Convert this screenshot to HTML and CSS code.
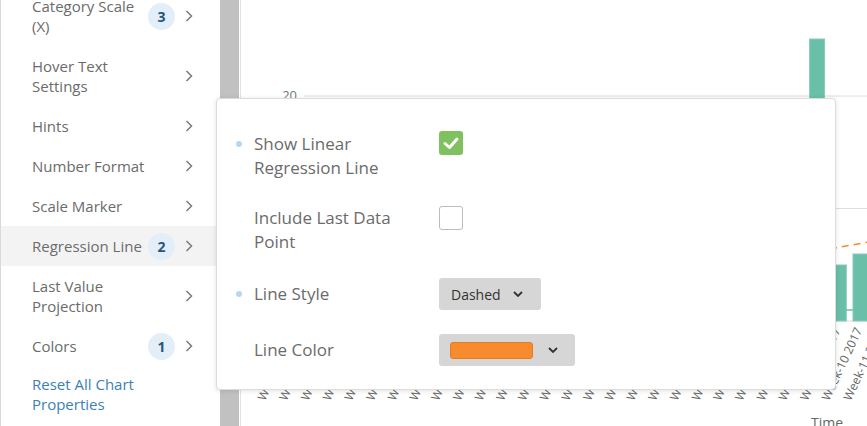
FILE: index.html
```html
<!DOCTYPE html>
<html lang="en">
<head>
    <meta charset="UTF-8">
    <title>Chart Properties - Regression Line</title>
    <link rel="stylesheet" href="styles.css">
</head>
<body>
<div class="app">
    <aside class="sidebar">
        <ul class="menu">
            <li class="menu-item"><span class="menu-label">Category Scale (X)</span><span class="badge">3</span><svg class="chevron" viewBox="0 0 8 12"><polyline points="1.5,1 6.5,6 1.5,11"/></svg></li>
            <li class="menu-item"><span class="menu-label">Hover Text Settings</span><span class="badge empty"></span><svg class="chevron" viewBox="0 0 8 12"><polyline points="1.5,1 6.5,6 1.5,11"/></svg></li>
            <li class="menu-item"><span class="menu-label">Hints</span><span class="badge empty"></span><svg class="chevron" viewBox="0 0 8 12"><polyline points="1.5,1 6.5,6 1.5,11"/></svg></li>
            <li class="menu-item"><span class="menu-label">Number Format</span><span class="badge empty"></span><svg class="chevron" viewBox="0 0 8 12"><polyline points="1.5,1 6.5,6 1.5,11"/></svg></li>
            <li class="menu-item"><span class="menu-label">Scale Marker</span><span class="badge empty"></span><svg class="chevron" viewBox="0 0 8 12"><polyline points="1.5,1 6.5,6 1.5,11"/></svg></li>
            <li class="menu-item active"><span class="menu-label">Regression Line</span><span class="badge">2</span><svg class="chevron" viewBox="0 0 8 12"><polyline points="1.5,1 6.5,6 1.5,11"/></svg></li>
            <li class="menu-item"><span class="menu-label">Last Value Projection</span><span class="badge empty"></span><svg class="chevron" viewBox="0 0 8 12"><polyline points="1.5,1 6.5,6 1.5,11"/></svg></li>
            <li class="menu-item"><span class="menu-label">Colors</span><span class="badge">1</span><svg class="chevron" viewBox="0 0 8 12"><polyline points="1.5,1 6.5,6 1.5,11"/></svg></li>
            <li class="menu-item reset"><span class="menu-label">Reset All Chart Properties</span></li>
        </ul>
    </aside>
    <div class="scrollbar"></div>
    <div class="spacer"></div>
    <main class="chart">
        <svg class="plot" viewBox="241 0 626 426" width="626" height="426">
            <g class="grid">
                <line x1="304" y1="96" x2="867" y2="96"/>
                <line x1="304" y1="208.5" x2="867" y2="208.5"/>
                <line x1="304" y1="321" x2="867" y2="321"/>
            </g>
            <text class="tick" x="297" y="100" text-anchor="end">20</text>
            <g id="bars" class="bars"></g>
            <line class="ref" x1="846" y1="310" x2="853" y2="310"/>
            <line class="trend" x1="700" y1="272" x2="880" y2="240"/>
            <g id="labels" class="labels"></g>
            <text class="axis-title" x="827" y="428" text-anchor="middle">Time</text>
        </svg>

        <div class="popup">
            <div class="prop-row first">
                <span class="dot"></span>
                <span class="prop-label">Show Linear Regression Line</span>
                <span class="checkbox checked">
                    <svg viewBox="0 0 24 24"><polyline points="6,12.5 10.5,16.5 18,8"/></svg>
                </span>
            </div>
            <div class="prop-row">
                <span class="dot none"></span>
                <span class="prop-label">Include Last Data Point</span>
                <span class="checkbox"></span>
            </div>
            <div class="prop-row center">
                <span class="dot"></span>
                <span class="prop-label">Line Style</span>
                <span class="select">Dashed<svg class="caret" viewBox="0 0 10 6"><polyline points="1,1 5,5 9,1"/></svg></span>
            </div>
            <div class="prop-row center">
                <span class="dot none"></span>
                <span class="prop-label">Line Color</span>
                <span class="select color"><span class="swatch"></span><svg class="caret" viewBox="0 0 10 6"><polyline points="1,1 5,5 9,1"/></svg></span>
            </div>
        </div>
    </main>
</div>
<script>
    // bars and week labels of the underlying chart
    const heights = [118, 140, 125, 150, 132, 110, 160, 145, 128, 170, 150, 138, 165, 142, 155, 172, 148, 160, 175, 150, 168, 158, 180, 170, 282, 56, 67, 170];
    const svgNs = "http://www.w3.org/2000/svg";
    const bars = document.getElementById("bars");
    const labels = document.getElementById("labels");
    const total = heights.length;
    const weeks = [];
    for (let i = 0; i < total; i++) {
        let w = 11 - (total - 1 - i);
        let year = 2017;
        if (w <= 0) { w += 52; year = 2016; }
        weeks.push("Week-" + String(w).padStart(2, "0") + " " + year);
    }
    heights.forEach((h, i) => {
        const cx = 882.2 - 21.7 * (total - 1 - i);
        const rect = document.createElementNS(svgNs, "rect");
        rect.setAttribute("x", cx - 7.5);
        rect.setAttribute("y", 321 - h);
        rect.setAttribute("width", 15);
        rect.setAttribute("height", h);
        bars.appendChild(rect);

        const t = document.createElementNS(svgNs, "text");
        t.setAttribute("x", cx + 2);
        t.setAttribute("y", 330);
        t.setAttribute("text-anchor", "end");
        t.setAttribute("transform", "rotate(-65 " + (cx + 2) + " 330)");
        t.textContent = weeks[i];
        labels.appendChild(t);
    });
</script>
</body>
</html>
```

FILE: styles.css
```css
body {
    margin: 0;
    font-family: 'Open Sans', 'Noto Sans', sans-serif;
    background: #ffffff;
    overflow: hidden;
}
.app {
    display: flex;
    width: 867px;
    height: 426px;
    overflow: hidden;
}
.sidebar {
    flex: 0 0 219px;
    border-left: 1px solid #d9d9d9;
    background: #ffffff;
    overflow: hidden;
}
.menu {
    list-style: none;
    margin: -14px 0 0 0;
    padding: 0;
}
.menu-item {
    display: flex;
    align-items: center;
    padding: 10px 0 10px 31px;
    font-size: 15px;
    line-height: 20px;
    color: #6b6b6b;
}
.menu-item.active {
    background: #f3f3f3;
}
.menu-item.reset {
    padding-top: 8px;
    color: #3b7fb6;
}
.menu-label {
    flex: 0 0 116px;
}
.badge {
    flex: 0 0 27px;
    height: 27px;
    margin: -4px 0;
    border-radius: 50%;
    background: #e2eef8;
    color: #27557e;
    font-weight: 700;
    font-size: 14px;
    line-height: 27px;
    text-align: center;
}
.badge.empty {
    background: none;
}
.chevron {
    width: 8px;
    height: 12px;
    margin-left: 10px;
    fill: none;
    stroke: #7a7a7a;
    stroke-width: 1.5;
}
.scrollbar {
    flex: 0 0 19px;
    background: #c1c1c1;
}
.spacer {
    flex: 0 0 1px;
    background: #ffffff;
}
.chart {
    flex: 1;
    border-left: 1px solid #e2e2e2;
    position: relative;
}
.plot {
    display: block;
}
.grid line {
    stroke: #dedede;
    stroke-width: 1;
}
.tick {
    font-size: 13px;
    fill: #777;
}
.bars rect {
    fill: #6abfa9;
    stroke: #86ccb9;
    stroke-width: 1;
}
.ref {
    stroke: #6abfa9;
    stroke-width: 1.5;
}
.trend {
    stroke: #f78b2e;
    stroke-width: 1.5;
    stroke-dasharray: 7 5;
}
.labels text {
    font-size: 12px;
    fill: #666;
}
.axis-title {
    font-size: 14px;
    fill: #666;
}
.popup {
    position: absolute;
    left: -25px;
    top: 98px;
    width: 620px;
    height: 292px;
    box-sizing: border-box;
    background: #ffffff;
    border: 1px solid #dcdcdc;
    border-radius: 4px;
    box-shadow: 0 1px 5px rgba(0, 0, 0, 0.12);
    padding: 33px 0 0 17px;
    display: flex;
    flex-direction: column;
    gap: 24px;
}
.prop-row {
    display: flex;
    align-items: flex-start;
}
.prop-row.first {
    margin-bottom: 2px;
}
.prop-row.center {
    align-items: center;
}
.dot {
    flex: 0 0 6px;
    height: 6px;
    margin: 9px 12px 0 2px;
    border-radius: 50%;
    background: #b5d8f0;
}
.prop-row.center .dot {
    margin-top: 0;
}
.dot.none {
    background: none;
}
.prop-label {
    flex: 0 0 160px;
    margin-right: 25px;
    font-size: 17px;
    line-height: 24px;
    color: #6b6b6b;
}
.checkbox {
    width: 24px;
    height: 24px;
    box-sizing: border-box;
    border: 1.5px solid #bcbcbc;
    border-radius: 3px;
    background: #ffffff;
}
.checkbox.checked {
    margin-top: -1px;
    border: none;
    background: #7fc15e;
}
.checkbox svg {
    display: block;
    width: 24px;
    height: 24px;
    fill: none;
    stroke: #ffffff;
    stroke-width: 3;
    stroke-linecap: round;
    stroke-linejoin: round;
}
.select {
    display: flex;
    align-items: center;
    height: 32px;
    padding: 0 18px 0 12px;
    background: #d6d6d6;
    border-radius: 3px;
    font-size: 14px;
    color: #333;
}
.select.color {
    padding: 0 17px 0 11px;
}
.swatch {
    width: 83px;
    height: 17px;
    box-sizing: border-box;
    background: #f78b2e;
    border: 1px solid #e47d22;
    border-radius: 3px;
}
.caret {
    width: 10px;
    height: 6px;
    margin-left: 12px;
    fill: none;
    stroke: #333;
    stroke-width: 1.8;
}
.select.color .caret {
    margin-left: 15px;
}
```
